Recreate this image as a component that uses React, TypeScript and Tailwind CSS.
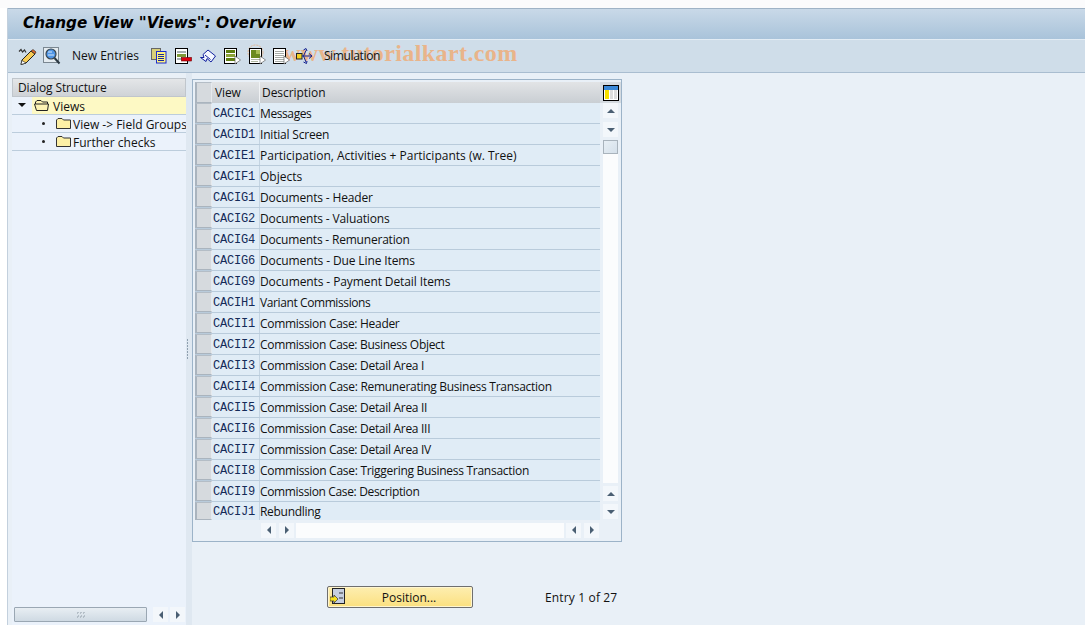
import React from "react";

const rows: [string, string, string][] = [
  ["CACIC1", "Messages", "tracking-[-0.4px]"],
  ["CACID1", "Initial Screen", "tracking-[-0.2px]"],
  ["CACIE1", "Participation, Activities + Participants (w. Tree)", "tracking-[0px]"],
  ["CACIF1", "Objects", "tracking-[0px]"],
  ["CACIG1", "Documents - Header", "tracking-[-0.15px]"],
  ["CACIG2", "Documents - Valuations", "tracking-[-0.15px]"],
  ["CACIG4", "Documents - Remuneration", "tracking-[-0.2px]"],
  ["CACIG6", "Documents - Due Line Items", "tracking-[-0.12px]"],
  ["CACIG9", "Documents - Payment Detail Items", "tracking-[-0.1px]"],
  ["CACIH1", "Variant Commissions", "tracking-[-0.4px]"],
  ["CACII1", "Commission Case: Header", "tracking-[-0.3px]"],
  ["CACII2", "Commission Case: Business Object", "tracking-[-0.3px]"],
  ["CACII3", "Commission Case: Detail Area I", "tracking-[-0.3px]"],
  ["CACII4", "Commission Case: Remunerating Business Transaction", "tracking-[-0.28px]"],
  ["CACII5", "Commission Case: Detail Area II", "tracking-[-0.3px]"],
  ["CACII6", "Commission Case: Detail Area III", "tracking-[-0.3px]"],
  ["CACII7", "Commission Case: Detail Area IV", "tracking-[-0.3px]"],
  ["CACII8", "Commission Case: Triggering Business Transaction", "tracking-[-0.28px]"],
  ["CACII9", "Commission Case: Description", "tracking-[-0.35px]"],
];

const Cursor = () => <path d="M11 8 L11 16 L16.500 12 Z" fill="#fff" stroke="#666" strokeWidth="0.7" />;

const Folder = ({ open }: { open?: boolean }) => (
  <svg width="16" height="13" viewBox="0 0 16 13" className="shrink-0">
    {open ? (
      <path d="M1.500 5 V3 L3 1.500 H7 L8.500 3 H13.500 V5 M1.500 5 H14.500 L13.500 11.500 H2.500 L0.500 5 Z" fill="#fdf3b4" stroke="#222" />
    ) : (
      <path d="M0.500 3 L2 1.500 H6 L7.500 3 H14.500 V11.500 H0.500 Z" fill="#fdf0a6" stroke="#333" />
    )}
  </svg>
);

const Arrow = ({ dir }: { dir: "up" | "down" | "left" | "right" }) => {
  const d = {
    up: "M1 7 L5 3 L9 7 Z",
    down: "M1 3 L9 3 L5 7 Z",
    left: "M7 1 L7 9 L3 5 Z",
    right: "M3 1 L3 9 L7 5 Z",
  }[dir];
  return (
    <div className="w-[15px] h-[15px] bg-[#f3f7fb] flex items-center justify-center shrink-0">
      <svg width="10" height="10" viewBox="0 0 10 10">
        <path d={d} fill="#4a5f73" />
      </svg>
    </div>
  );
};

const Selector = () => (
  <div className="w-[17px] shrink-0 bg-[#d6dade] border-l-2 border-t border-l-[#aab4be] border-t-[#b4bdc6] border-r border-b border-r-[#e6eaee] border-b-[#aab4be]" />
);

const codeFont = { fontFamily: '"Liberation Mono",monospace' };

export default function App() {
  return (
    <div
      className="relative w-[1085px] h-[625px] overflow-hidden bg-white text-[12px] text-[#111]"
      style={{ fontFamily: '"Open Sans","DejaVu Sans",sans-serif' }}
    >
      <div className="h-[8px] bg-[#fbfbfc]" />
      <div className="ml-[7px] h-[617px] flex flex-col bg-[#e9f0f7] border-l border-[#c3d0dd]">
        {/* title */}
        <div className="h-[31px] shrink-0 flex items-center pl-[15px] pb-[2px] bg-gradient-to-b from-[#c9d9e8] to-[#a9c3da] border-t border-[#9fb3c6]">
          <span
            className="text-[15.2px] font-bold italic text-black whitespace-nowrap"
            style={{ fontFamily: '"DejaVu Sans",sans-serif' }}
          >
            Change View "Views": Overview
          </span>
        </div>
        {/* toolbar */}
        <div className="relative h-[34px] shrink-0 flex items-center pl-[10px] bg-[#cfdde9] border-t border-[#e3ecf4] border-b border-b-[#a9bdd0] overflow-hidden">
          <svg width="17" height="19" viewBox="0 0 17 19" className="absolute left-[239px] top-[3px]">
            <circle cx="8.500" cy="9.500" r="7.500" fill="none" stroke="#e4b48c" strokeWidth="1" strokeDasharray="2 1" />
          </svg>
          <span
            className="absolute left-[275px] top-[-5px] text-[24px] font-bold whitespace-nowrap text-[#e9b48a] tracking-[0.4px]"
            style={{ fontFamily: '"Liberation Serif",serif' }}
          >
            www.tutorialkart.com
          </span>
          <div className="relative flex items-center">
            <svg width="19" height="17" viewBox="0 0 19 17" className="shrink-0">
              <path d="M1 3.500 L3 1.500 L4.500 4 L6.500 2 L8 4.500" fill="none" stroke="#333" strokeWidth="1.200" />
              <path d="M4 12 L13 3 L17 6 L8 15 L3 16.500 Z" fill="#f6cb55" stroke="#222" />
              <path d="M3 16.500 L4 12.500 L8 15 Z" fill="#fff" stroke="#222" strokeWidth="0.600" />
              <path d="M13 3 L15 1.500 L18 4 L17 6 Z" fill="#e0682a" stroke="#222" strokeWidth="0.600" />
            </svg>
            <svg width="18" height="18" viewBox="0 0 18 18" className="ml-[6px] shrink-0">
              <rect x="0.500" y="0.500" width="15" height="15" fill="#e4ebf0" stroke="#7b8791" />
              <circle cx="8" cy="7" r="5" fill="#4f95e6" stroke="#37454f" strokeWidth="1.200" />
              <path d="M5 5 L9 5 M5 8 L11 8" stroke="#d6e8fa" />
              <path d="M11.500 11 L16.500 16.500" stroke="#2c3943" strokeWidth="2" />
            </svg>
            <span className="ml-[11px] mr-[12px] whitespace-nowrap">New Entries</span>
            <svg width="16" height="16" viewBox="0 0 16 16" className="shrink-0">
              <rect x="0.500" y="0.500" width="9" height="11" fill="#d8cf78" stroke="#666" />
              <rect x="5.500" y="3.500" width="9.500" height="11.500" fill="#fff27a" stroke="#1a2ad0" />
              <path d="M7 6.500 H13 M7 8.500 H13 M7 10.500 H13 M7 12.500 H13" stroke="#1a2a9a" />
            </svg>
            <svg width="17" height="16" viewBox="0 0 17 16" className="ml-[8px] shrink-0">
              <rect x="0.500" y="0.500" width="12" height="15" fill="#fff" stroke="#000" />
              <rect x="2" y="3" width="9" height="2" fill="#a5aeb0" />
              <rect x="2" y="6" width="9" height="3" fill="#7f9a3a" />
              <rect x="2" y="10" width="9" height="2" fill="#a5aeb0" />
              <rect x="6.500" y="9.500" width="10" height="3.500" fill="#e00010" stroke="#600" strokeWidth="0.600" />
            </svg>
            <svg width="16" height="14" viewBox="0 0 16 14" className="ml-[8px] shrink-0">
              <path d="M0.500 8.500 L4 8.500 L3 5.500 L8 1 L15.500 7 L11 13 L7 9.500 L6 12.500 Z" fill="#f4f8ff" stroke="#12209f" />
              <path d="M5 6 L10.500 10.500" stroke="#12209f" />
            </svg>
            <svg width="17" height="17" viewBox="0 0 17 17" className="ml-[8px] shrink-0">
              <rect x="0.500" y="0.500" width="12" height="15" fill="#fff" stroke="#000" />
              <rect x="2" y="2" width="9" height="3" fill="#5f7f12" />
              <rect x="2" y="6" width="9" height="3" fill="#8ca436" />
              <rect x="2" y="10" width="9" height="3" fill="#5f7f12" />
              <Cursor />
            </svg>
            <svg width="17" height="17" viewBox="0 0 17 17" className="ml-[8px] shrink-0">
              <rect x="0.500" y="0.500" width="12" height="15" fill="#fff" stroke="#000" />
              <rect x="2" y="2" width="9" height="8" fill="#6b8a1c" />
              <rect x="7" y="2" width="4" height="4" fill="#a8bd52" />
              <path d="M2 11.500 H11 M2 13.500 H9" stroke="#b0b8a0" />
              <Cursor />
            </svg>
            <svg width="17" height="17" viewBox="0 0 17 17" className="ml-[7px] shrink-0">
              <rect x="0.500" y="0.500" width="12" height="15" fill="#fff" stroke="#000" />
              <path d="M2 3.500 H11 M2 5.500 H11 M2 7.500 H11 M2 9.500 H11 M2 11.500 H11 M2 13.500 H11" stroke="#a8aba6" />
              <Cursor />
            </svg>
            <svg width="17" height="17" viewBox="0 0 17 17" className="ml-[6px] shrink-0">
              <rect x="0.500" y="5.500" width="5.500" height="5.500" fill="#f2d020" stroke="#222" />
              <path d="M6 8 H16 M13 5.500 L16 8 L13 10.500 M7.500 8 L10 2.500 M7.500 2 L10 0.500 L11 3 M7.500 8 L10 14 M7.500 14 L10.500 15.500 L11 13" fill="none" stroke="#12208f" />
            </svg>
            <span className="ml-[11px] whitespace-nowrap tracking-[-0.35px]">Simulation</span>
          </div>
        </div>
        {/* main */}
        <div className="flex-1 min-h-0 flex">
          {/* left panel */}
          <div className="w-[174px] ml-[4px] mt-[5px] flex flex-col bg-[#ebf2fb] shrink-0">
            <div className="h-[19px] shrink-0 flex items-center pl-[5px] bg-gradient-to-b from-[#e4e6e8] to-[#cfd3d7] border border-[#c0c6cc] whitespace-nowrap tracking-[-0.12px]">
              Dialog Structure
            </div>
            <div className="h-[18px] shrink-0 flex items-center border-b border-[#bccddc]">
              <div className="w-[20px] shrink-0 flex justify-center">
                <svg width="9" height="5" viewBox="0 0 9 5"><path d="M0 0 H8 L4 4 Z" fill="#111" /></svg>
              </div>
              <div className="flex-1 h-full flex items-center gap-[3px] pl-[2px] bg-[#fdf9c4]">
                <Folder open />
                <span className="pt-[2px]">Views</span>
              </div>
            </div>
            {["View -> Field Groups", "Further checks"].map((t) => (
              <div key={t} className="h-[18px] shrink-0 flex items-center border-b border-[#bccddc] overflow-hidden">
                <span className="ml-[30px] w-[3px] h-[3px] rounded-full bg-[#222] shrink-0" />
                <div className="ml-[11px] shrink-0"><Folder /></div>
                <span className="ml-[1px] pt-[2px] whitespace-nowrap">{t}</span>
              </div>
            ))}
            <div className="flex-1" />
            <div className="h-[18px] shrink-0 flex items-start pl-[2px]">
              <div className="w-[133px] h-[15px] bg-gradient-to-b from-[#e8eef3] to-[#cfdae3] border border-[#9aa7b3] rounded-[1px] flex items-center justify-center">
                <svg width="8" height="6" viewBox="0 0 8 6">
                  <path d="M0 1 H1 M3 1 H4 M6 1 H7 M1 4 H2 M4 4 H5 M7 4 H8 M0 5 H1 M3 5 H4 M6 5 H7 M1 0 H2 M4 0 H5 M7 0 H8" stroke="#8d99a4" />
                </svg>
              </div>
              <div className="ml-[6px]"><Arrow dir="left" /></div>
              <div className="ml-[2px]"><Arrow dir="right" /></div>
            </div>
          </div>
          {/* sash */}
          <div className="w-[6px] shrink-0 bg-[#dfe8f1] flex flex-col items-start justify-center gap-[1px] pl-[1px]">
            {[0, 1, 2, 3, 4, 5, 6].map((i) => (
              <span key={i} className="w-[1px] h-[2px] bg-[#8fa0b0]" />
            ))}
          </div>
          {/* right */}
          <div className="flex-1 flex flex-col items-start">
            <div className="mt-[6px] w-[430px] h-[463px] shrink-0 bg-[#e9f0f7] border border-[#9cb3c8] pt-[2px] pl-[2px] flex flex-col">
              <div className="flex">
                <div className="w-[405px] shrink-0">
                  {/* header */}
                  <div className="h-[21px] flex bg-gradient-to-b from-[#e2e4e6] to-[#c9ced3]">
                    <Selector />
                    <div className="w-[48px] pl-[3px] flex items-center border-r border-[#f0f2f4] tracking-[-0.1px]">View</div>
                    <div className="flex-1 pl-[2px] flex items-center tracking-[-0.05px]">Description</div>
                  </div>
                  {rows.map(([a, b, track]) => (
                    <div key={a} className="h-[21px] flex bg-[#e0ecf6] border-b border-[#b9cbdb]">
                      <Selector />
                      <div
                        className="w-[48px] shrink-0 pl-[1px] pt-[2px] flex items-center text-[#142a58] border-r border-[#c4d4e2] text-[12px] tracking-[-0.2px]"
                        style={codeFont}
                      >
                        {a}
                      </div>
                      <div className={`flex-1 pt-[1px] flex items-center whitespace-nowrap ${track}`}>{b}</div>
                    </div>
                  ))}
                  <div className="h-[18px] flex bg-[#e0ecf6]">
                    <Selector />
                    <div
                      className="w-[48px] shrink-0 pl-[1px] pt-[1px] flex items-center text-[#142a58] border-r border-[#c4d4e2] text-[12px] tracking-[-0.2px]"
                      style={codeFont}
                    >
                      CACIJ1
                    </div>
                    <div className="flex-1 pt-[1px] flex items-center tracking-[-0.3px]">Rebundling</div>
                  </div>
                </div>
                {/* vertical scrollbar */}
                <div className="w-[21px] shrink-0 flex flex-col items-center pb-[1px]">
                  <div className="w-full h-[21px] flex items-center justify-center bg-[#d4dae0]">
                    <svg width="16" height="16" viewBox="0 0 16 16">
                      <rect x="0.500" y="0.500" width="15" height="15" fill="#fff" stroke="#000" />
                      <rect x="1" y="1" width="14" height="4" fill="#3a88d8" />
                      <rect x="2" y="5" width="4" height="9" fill="#f7e000" />
                      <rect x="7" y="5" width="3" height="9" fill="#ddd" />
                      <rect x="11" y="5" width="3" height="9" fill="#ddd" />
                    </svg>
                  </div>
                  <Arrow dir="up" />
                  <div className="mt-[4px]"><Arrow dir="down" /></div>
                  <div className="mt-[3px] w-[15px] flex-1 bg-[#fbfcfd] flex flex-col">
                    <div className="w-[15px] h-[14px] bg-gradient-to-br from-[#e8eff5] to-[#d5e0ea] border border-[#a9b3bc]" />
                  </div>
                  <div className="mt-[3px]"><Arrow dir="up" /></div>
                  <div className="mt-[3px]"><Arrow dir="down" /></div>
                </div>
              </div>
              {/* horizontal scrollbar */}
              <div className="mt-[2px] h-[16px] flex items-center pl-[66px]">
                <Arrow dir="left" />
                <div className="ml-[3px]"><Arrow dir="right" /></div>
                <div className="ml-[2px] w-[268px] h-[15px] bg-[#fbfcfd]" />
                <div className="ml-[2px]"><Arrow dir="left" /></div>
                <div className="ml-[3px]"><Arrow dir="right" /></div>
              </div>
            </div>
            {/* position */}
            <div className="mt-[44px] flex items-center">
              <div className="ml-[135px] w-[146px] h-[22px] relative flex items-center justify-center pl-[18px] bg-gradient-to-b from-[#fdeeb0] to-[#fbe07e] border border-[#6f6f6f] rounded-[2px] shadow-[inset_0_0_0_1px_#fff6d0]">
                <svg width="16" height="17" viewBox="0 0 16 17" className="absolute left-[2px] top-[1px]">
                  <rect x="2.500" y="0.500" width="12" height="15" fill="#c6cfe0" stroke="#222" />
                  <path d="M9 5 H13 M9 10 H13" stroke="#333" />
                  <path d="M0 9 H4 V7 L8 11 L4 15 V13 H0 Z" fill="#f7e020" stroke="#333" strokeWidth="0.700" />
                </svg>
                <span className="pt-[1px]">Position...</span>
              </div>
              <span className="ml-[72px] pt-[1px] whitespace-nowrap tracking-[0.15px]">Entry 1 of 27</span>
            </div>
          </div>
        </div>
      </div>
    </div>
  );
}
